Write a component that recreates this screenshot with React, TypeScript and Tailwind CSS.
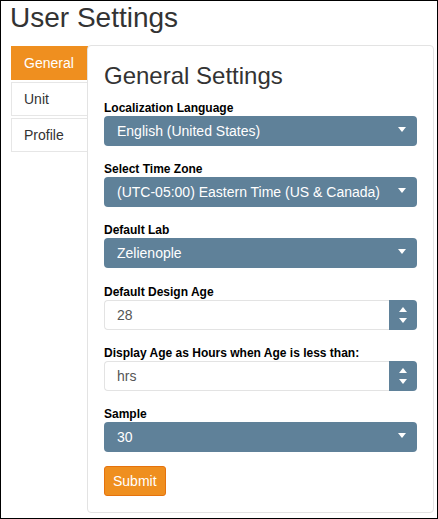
import { useState } from 'react'

/* User settings screen: title, vertical tab list on the left,
   the "General" panel with slate selects / number inputs. */

const SLATE = 'bg-[#5f8199]'

const TABS = ['General', 'Unit', 'Profile']

function Caret() {
  return (
    <span className="pointer-events-none absolute right-[11px] top-[11px] w-0 h-0 border-l-[4px] border-r-[4px] border-t-[5px] border-l-transparent border-r-transparent border-t-white" />
  )
}

function SlateSelect({ value, options }: { value: string; options: string[] }) {
  return (
    <div className="relative">
      <select
        defaultValue={value}
        className={`${SLATE} appearance-none block w-full h-[30px] rounded-[4px] pl-[13px] pr-7 text-[14px] text-white outline-none`}
      >
        {options.map((o) => (
          <option key={o}>{o}</option>
        ))}
      </select>
      <Caret />
    </div>
  )
}

function Spinner({ value }: { value: string }) {
  return (
    <div className="flex h-[30px]">
      <input
        defaultValue={value}
        className="flex-1 min-w-0 border border-[#e3e3e3] border-r-0 rounded-l-[4px] pl-3 text-[14px] text-[#555] outline-none"
      />
      <div className={`${SLATE} w-[28px] rounded-r-[4px] flex flex-col items-center justify-center gap-[6px]`}>
        <span className="w-0 h-0 border-l-[4px] border-r-[4px] border-b-[5px] border-l-transparent border-r-transparent border-b-white" />
        <span className="w-0 h-0 border-l-[4px] border-r-[4px] border-t-[5px] border-l-transparent border-r-transparent border-t-white" />
      </div>
    </div>
  )
}

function Field({ label, children, className }: { label: string; children: React.ReactNode; className?: string }) {
  return (
    <div className={className}>
      <label className="block text-[12px] leading-[16px] font-bold text-black">{label}</label>
      {children}
    </div>
  )
}

export default function App() {
  const [tab, setTab] = useState('General')

  return (
    <div className="w-[438px] h-[519px] border border-black bg-white text-[#333] font-['Liberation_Sans',Arial,sans-serif]">
      <h1 className="pl-[9px] pt-px text-[28px] leading-[32px] font-normal">User Settings</h1>

      <div className="flex mt-[11px] pl-[10px]">
        <ul className="w-[77px] mt-px flex flex-col gap-[2px]">
          {TABS.map((t) => (
            <li key={t}>
              <button
                onClick={() => setTab(t)}
                className={
                  t === tab
                    ? 'w-full h-[34px] text-left pl-[12px] text-[14px] text-white bg-[#ef8f1f] border border-[#ef8f1f]'
                    : 'w-full h-[34px] text-left pl-[12px] text-[14px] text-[#333] bg-white border border-[#e6e6e6]'
                }
              >
                {t}
              </button>
            </li>
          ))}
        </ul>

        <div className="-ml-px w-[347px] h-[468px] border border-[#e3e3e3] rounded-[4px] px-4 pt-[17px]">
          <h3 className="text-[24px] leading-[26px] font-normal mb-[11px]">General Settings</h3>

          <Field label="Localization Language" className="mb-[15px]">
            <SlateSelect value="English (United States)" options={['English (United States)']} />
          </Field>
          <Field label="Select Time Zone" className="mb-[15px]">
            <SlateSelect
              value="(UTC-05:00) Eastern Time (US & Canada)"
              options={['(UTC-05:00) Eastern Time (US & Canada)']}
            />
          </Field>
          <Field label="Default Lab" className="mb-[16px]">
            <SlateSelect value="Zelienople" options={['Zelienople']} />
          </Field>
          <Field label="Default Design Age" className="mb-[15px]">
            <Spinner value="28" />
          </Field>
          <Field label="Display Age as Hours when Age is less than:" className="mb-[15px]">
            <Spinner value="hrs" />
          </Field>
          <Field label="Sample">
            <SlateSelect value="30" options={['30']} />
          </Field>

          <button className="mt-[14px] h-[30px] px-2 rounded-[3px] border border-[#e5720d] bg-[#ef8f1f] text-white text-[14px]">
            Submit
          </button>
        </div>
      </div>
    </div>
  )
}
